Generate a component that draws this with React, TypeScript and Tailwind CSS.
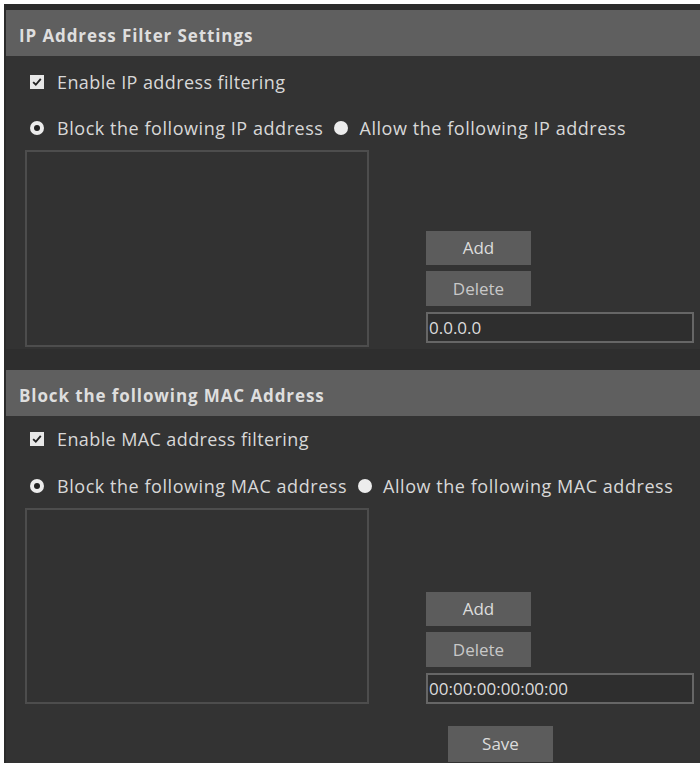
import React, { useState } from 'react';

const font = { fontFamily: '"Open Sans", "Noto Sans", sans-serif' };

const CheckBox = ({ checked, onToggle }: { checked: boolean; onToggle: () => void }) => (
  <span
    onClick={onToggle}
    className="w-[14px] h-[14px] bg-[#e8e8e8] flex items-center justify-center cursor-pointer"
  >
    {checked && (
      <svg viewBox="0 0 14 14" className="w-[12px] h-[12px]">
        <path d="M2.5 7.2 L5.6 10.2 L11.4 3.4" fill="none" stroke="#222" strokeWidth="2.2" />
      </svg>
    )}
  </span>
);

const Radio = ({ checked, onPick }: { checked: boolean; onPick: () => void }) => (
  <span
    onClick={onPick}
    className="w-[14px] h-[14px] rounded-full bg-[#ececec] flex items-center justify-center cursor-pointer"
  >
    {checked && <span className="w-[6px] h-[6px] rounded-full bg-[#222]" />}
  </span>
);

interface FilterSectionProps {
  title: string;
  kind: string;
  placeholder: string;
  topPad: string;
  rowGap: string;
  listHeight: string;
  btnOffset: string;
}

const FilterSection = ({ title, kind, placeholder, topPad, rowGap, listHeight, btnOffset }: FilterSectionProps) => {
  const [enabled, setEnabled] = useState(true);
  const [mode, setMode] = useState<'block' | 'allow'>('block');
  const [value, setValue] = useState(placeholder);

  return (
    <div className="flex flex-col">
      {/* Header */}
      <div className="h-[46px] bg-[#5f5f5f] flex items-center pl-[13px] pt-[6px]">
        <span className="text-[17px] font-bold tracking-[0.9px] text-[#dedede]">{title}</span>
      </div>

      <div className={`flex flex-col pl-[19px] ${topPad}`}>
        <div className="h-[24px] flex items-center pl-[5px] gap-[13px]">
          <CheckBox checked={enabled} onToggle={() => setEnabled(!enabled)} />
          <span className="text-[18px] tracking-[0.4px] text-[#d8d8d8]">Enable {kind} address filtering</span>
        </div>

        <div className={`h-[24px] flex items-center pl-[5px] ${rowGap}`}>
          <Radio checked={mode === 'block'} onPick={() => setMode('block')} />
          <span className="ml-[13px] text-[18px] tracking-[0.55px] text-[#d8d8d8]">Block the following {kind} address</span>
          <span className="ml-[11px]">
            <Radio checked={mode === 'allow'} onPick={() => setMode('allow')} />
          </span>
          <span className="ml-[11px] text-[18px] tracking-[0.55px] text-[#d8d8d8]">Allow the following {kind} address</span>
        </div>

        <div className="flex mt-[10px]">
          <div className={`w-[344px] ${listHeight} border-[2px] border-[#4d4d4d] bg-[#323232]`} />
          <div className={`flex flex-col ml-[57px] ${btnOffset}`}>
            <button className="w-[105px] h-[34px] bg-[#5c5c5c] text-[17px] text-[#dcdcdc]">Add</button>
            <button className="w-[105px] h-[35px] mt-[6px] bg-[#5c5c5c] text-[17px] text-[#c8c8c8]">Delete</button>
            <input
              value={value}
              onChange={(e) => setValue(e.target.value)}
              className="w-[268px] h-[31px] mt-[6px] border-[2px] border-[#666] bg-[#2e2e2e] text-[17px] text-[#dcdcdc] px-[1px] outline-none"
            />
          </div>
        </div>
      </div>
    </div>
  );
};

export default function App() {
  return (
    <div className="w-[700px] h-[767px] bg-white pt-[4px] pl-[4px] pb-[4px]" style={font}>
      <div className="h-full bg-[#333] border-l-[2px] border-t-[6px] border-[#2b2b2b] flex flex-col">
        <FilterSection
          title="IP Address Filter Settings"
          kind="IP"
          placeholder="0.0.0.0"
          topPad="pt-[14px]"
          rowGap="mt-[22px]"
          listHeight="h-[197px]"
          btnOffset="mt-[81px]"
        />
        <div className="h-[21px] bg-[#2e2e2e] mt-[2px]" />
        <FilterSection
          title="Block the following MAC Address"
          kind="MAC"
          placeholder="00:00:00:00:00:00"
          topPad="pt-[11px]"
          rowGap="mt-[23px]"
          listHeight="h-[196px]"
          btnOffset="mt-[84px]"
        />
        <div className="flex pl-[442px] mt-[22px]">
          <button className="w-[105px] h-[36px] bg-[#5c5c5c] text-[17px] text-[#dcdcdc]">Save</button>
        </div>
      </div>
    </div>
  );
}
